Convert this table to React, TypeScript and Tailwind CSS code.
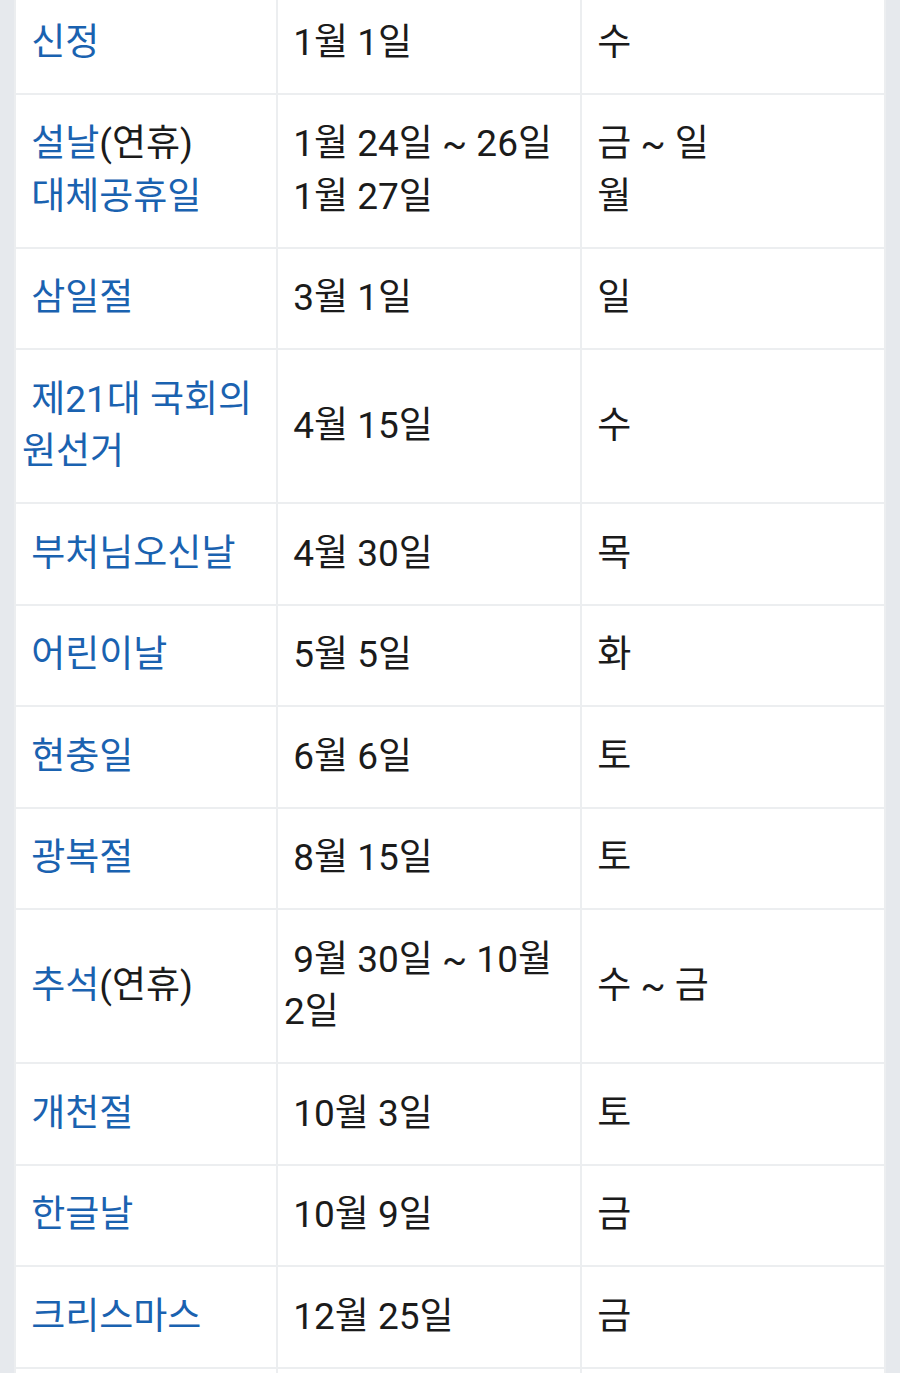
const S = "\u00a0";

const rows: { name: string[]; date: string[]; day: string[] }[] = [
  { name: [S + "신정"], date: [S + "1월 1일"], day: [S + "수"] },
  { name: [S + "설날(연휴)", S + "대체공휴일"], date: [S + "1월 24일 ~ 26일", S + "1월 27일"], day: [S + "금 ~ 일", S + "월"] },
  { name: [S + "삼일절"], date: [S + "3월 1일"], day: [S + "일"] },
  { name: [S + "제21대 국회의", "원선거"], date: [S + "4월 15일"], day: [S + "수"] },
  { name: [S + "부처님오신날"], date: [S + "4월 30일"], day: [S + "목"] },
  { name: [S + "어린이날"], date: [S + "5월 5일"], day: [S + "화"] },
  { name: [S + "현충일"], date: [S + "6월 6일"], day: [S + "토"] },
  { name: [S + "광복절"], date: [S + "8월 15일"], day: [S + "토"] },
  { name: [S + "추석(연휴)"], date: [S + "9월 30일 ~ 10월", "2일"], day: [S + "수 ~ 금"] },
  { name: [S + "개천절"], date: [S + "10월 3일"], day: [S + "토"] },
  { name: [S + "한글날"], date: [S + "10월 9일"], day: [S + "금"] },
  { name: [S + "크리스마스"], date: [S + "12월 25일"], day: [S + "금"] },
];

function Lines({ lines, link }: { lines: string[]; link?: boolean }) {
  return (
    <>
      {lines.map((l, i) => {
        // "(연휴)" stays black in the reference
        const m = link ? l.match(/^(.*?)(\(연휴\))$/) : null;
        return (
          <div key={i} className="whitespace-nowrap">
            {m ? (
              <>
                <span className="text-[#1a62b0]">{m[1]}</span>
                <span className="text-[#1b1b1b]">{m[2]}</span>
              </>
            ) : (
              <span className={link ? "text-[#1a62b0]" : "text-[#1b1b1b]"}>{l}</span>
            )}
          </div>
        );
      })}
    </>
  );
}

export default function App() {
  return (
    <div
      className="h-[1373px] overflow-hidden bg-[#e6e9ed] px-[14px]"
      style={{ fontFamily: 'Roboto, "Noto Sans CJK KR", sans-serif' }}
    >
      <table className="-mt-[9px] w-full table-fixed border-collapse bg-white text-[37px] leading-[52.5px]">
        <colgroup>
          <col className="w-[262px]" />
          <col className="w-[304px]" />
          <col />
        </colgroup>
        <tbody>
          {rows.map((r, i) => (
            <tr key={i}>
              <td className="border-2 border-[#eceef0] py-[23.5px] pl-[6px] pr-1 align-middle">
                <Lines lines={r.name} link />
              </td>
              <td className="border-2 border-[#eceef0] py-[23.5px] pl-[6px] pr-1 align-middle">
                <Lines lines={r.date} />
              </td>
              <td className="border-2 border-[#eceef0] py-[23.5px] pl-[6px] pr-1 align-middle">
                <Lines lines={r.day} />
              </td>
            </tr>
          ))}
          <tr>
            <td className="h-[60px] border-2 border-[#eceef0]" />
            <td className="border-2 border-[#eceef0]" />
            <td className="border-2 border-[#eceef0]" />
          </tr>
        </tbody>
      </table>
    </div>
  );
}
